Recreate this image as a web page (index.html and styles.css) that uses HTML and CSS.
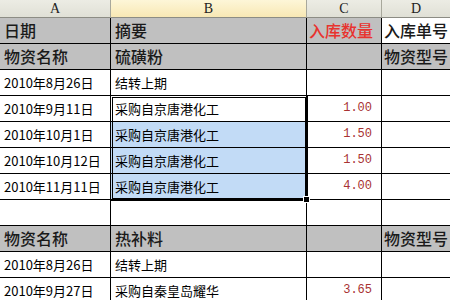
FILE: index.html
```html
<!DOCTYPE html>
<html>
<head>
<meta charset="utf-8">
<link rel="stylesheet" href="styles.css">
</head>
<body>
<div class="sheet">
  <div class="grid">
    <div class="ch">A</div><div class="ch ch-sel">B</div><div class="ch">C</div><div class="ch">D</div>

    <div class="c big gray">日期</div><div class="c big gray">摘要</div><div class="c big gray red">入库数量</div><div class="c big d">入库单号</div>
    <div class="c big gray">物资名称</div><div class="c big gray">硫磺粉</div><div class="c gray"></div><div class="c big gray d">物资型号</div>
    <div class="c">2010年8月26日</div><div class="c">结转上期</div><div class="c"></div><div class="c"></div>
    <div class="c">2010年9月11日</div><div class="c">采购自京唐港化工</div><div class="c num">1.00</div><div class="c"></div>
    <div class="c">2010年10月1日</div><div class="c blue">采购自京唐港化工</div><div class="c num">1.50</div><div class="c"></div>
    <div class="c">2010年10月12日</div><div class="c blue">采购自京唐港化工</div><div class="c num">1.50</div><div class="c"></div>
    <div class="c">2010年11月11日</div><div class="c blue">采购自京唐港化工</div><div class="c num">4.00</div><div class="c"></div>
    <div class="c"></div><div class="c"></div><div class="c"></div><div class="c"></div>
    <div class="c big gray">物资名称</div><div class="c big gray">热补料</div><div class="c gray"></div><div class="c big gray d">物资型号</div>
    <div class="c">2010年8月26日</div><div class="c">结转上期</div><div class="c"></div><div class="c"></div>
    <div class="c">2010年9月27日</div><div class="c">采购自秦皇岛耀华</div><div class="c num">3.65</div><div class="c"></div>
  </div>
  <div class="selection"><span class="handle"></span></div>
</div>
</body>
</html>
```

FILE: styles.css
```css
html, body {
  margin: 0;
  padding: 0;
  background: #ffffff;
  overflow: hidden;
}

.sheet {
  position: relative;
  width: 450px;
  height: 300px;
  overflow: hidden;
}

.grid {
  display: grid;
  grid-template-columns: 111px 196px 75px 69px;
  grid-template-rows: 18px repeat(11, 26px);
  font-family: "Noto Sans CJK SC", "Liberation Sans", sans-serif;
  color: #000;
}

.ch {
  box-sizing: border-box;
  background: linear-gradient(#ecece4, #e0e0d6);
  border-right: 1px solid #a8a89c;
  border-bottom: 1px solid #8c8c84;
  font-family: "Liberation Serif", serif;
  font-size: 14px;
  line-height: 17px;
  text-align: center;
  color: #222;
}

.ch-sel {
  background: linear-gradient(#fdf6d8, #f8e8b4);
}

.c {
  box-sizing: border-box;
  border-right: 1px solid #000;
  border-bottom: 1px solid #000;
  font-size: 13px;
  line-height: 25px;
  padding-left: 4px;
  white-space: nowrap;
  overflow: hidden;
}

.big {
  font-size: 16px;
  padding-left: 4px;
  font-weight: 500;
  color: #1a1a1a;
}

.d {
  padding-left: 2px;
}

.gray {
  background: #c0c0c0;
}

.red {
  color: #e8332f;
  padding-left: 2px;
}

.blue {
  background: #c2dbf6;
}

.num {
  text-align: right;
  padding-right: 9px;
  font-family: "Liberation Mono", monospace;
  font-size: 12px;
  color: #a83232;
}

.selection {
  position: absolute;
  left: 110px;
  top: 95px;
  width: 198px;
  height: 106px;
  box-sizing: border-box;
  border: 3px double #000;
  pointer-events: none;
}

.handle {
  position: absolute;
  right: -5px;
  bottom: -5px;
  width: 5px;
  height: 5px;
  background: #000;
  border: 1px solid #fff;
}
```
